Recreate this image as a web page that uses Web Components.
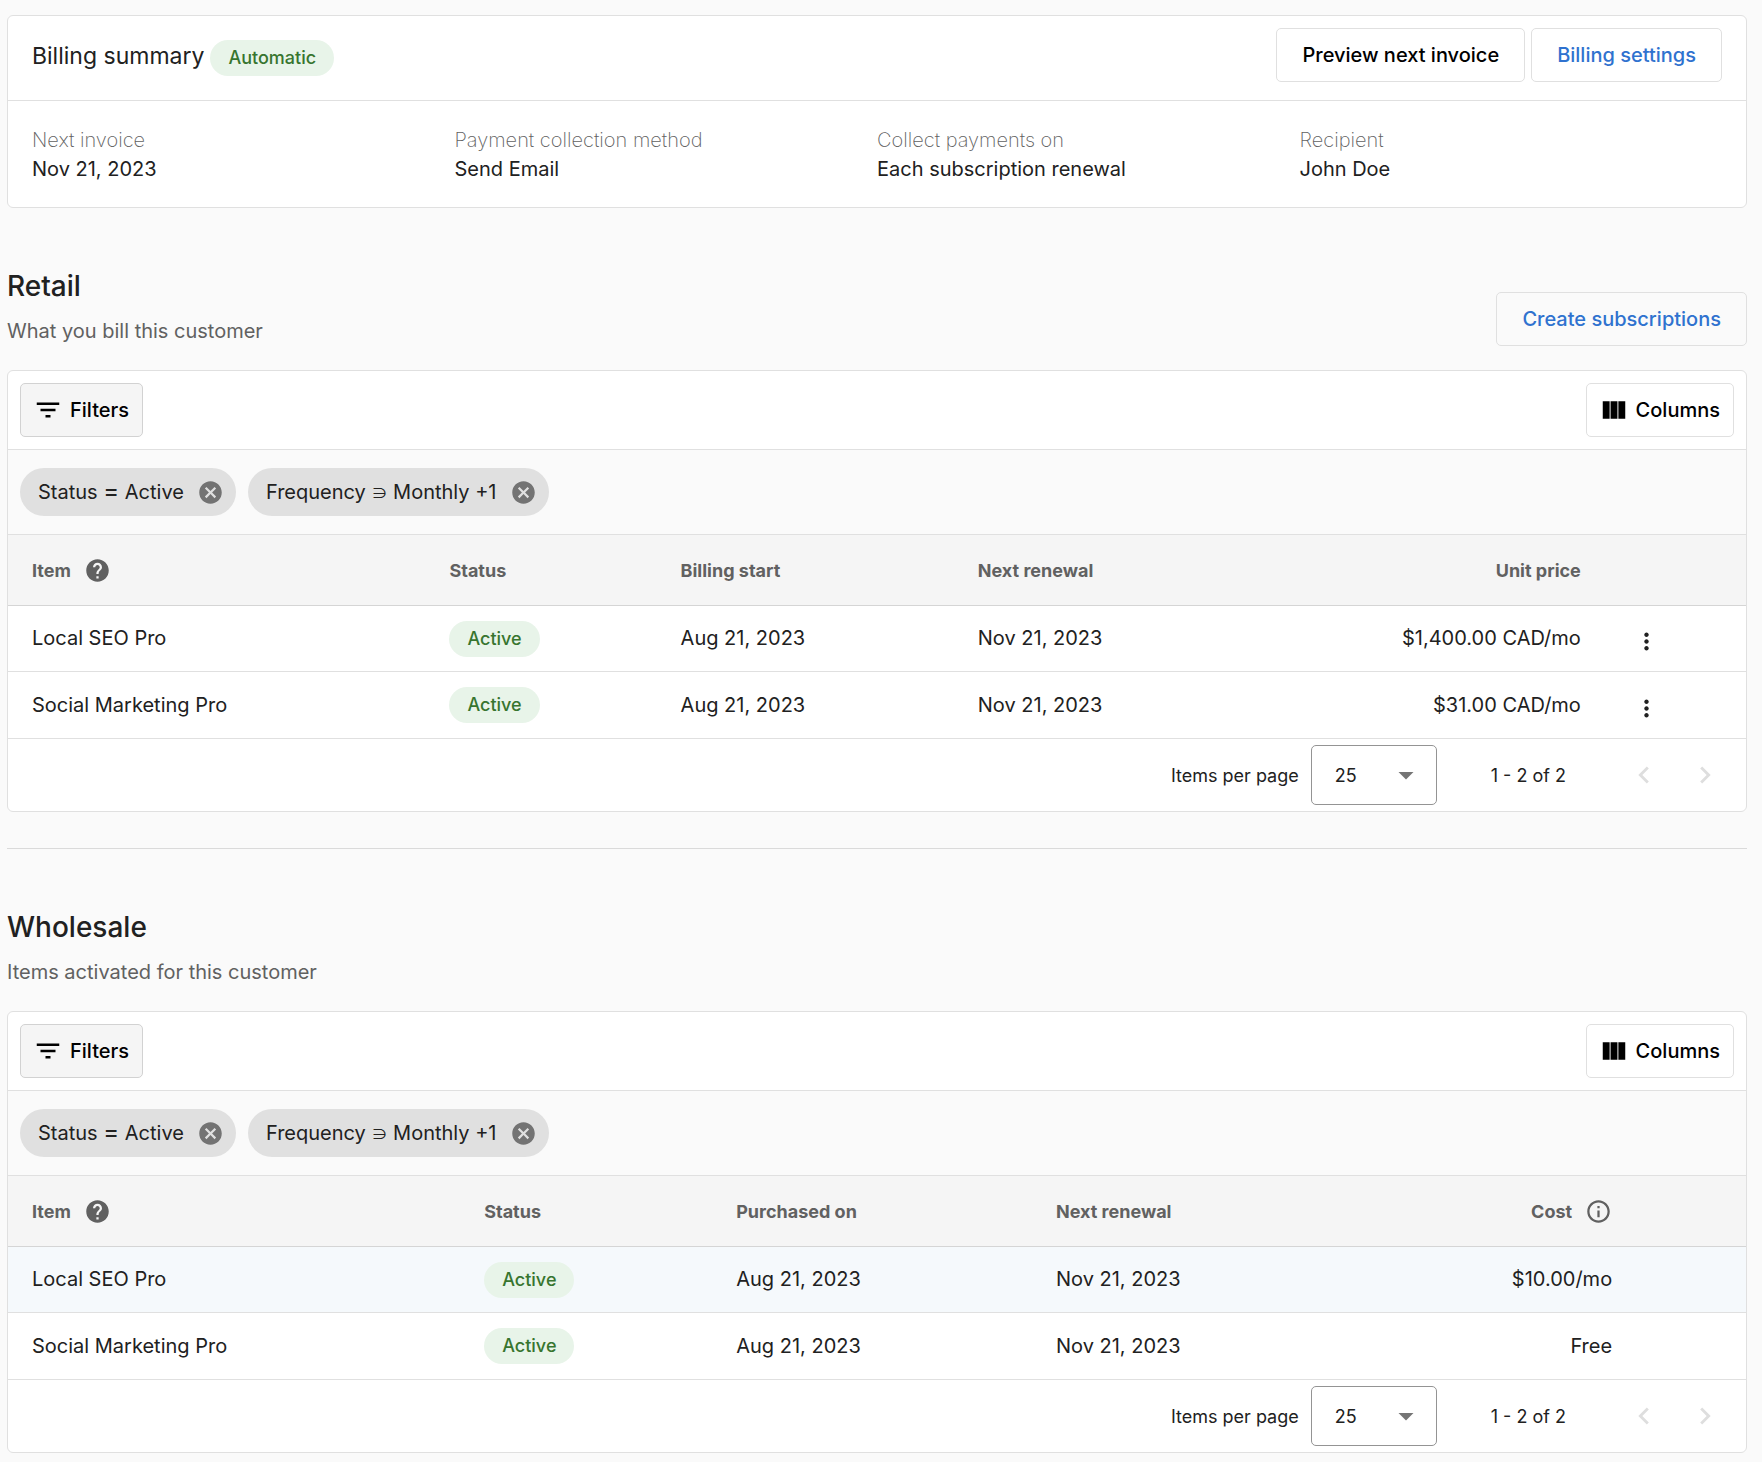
<!DOCTYPE html>
<html lang="en">
<head>
<meta charset="utf-8">
<title>Billing</title>
<style>
  body {
    margin: 0;
    padding: 15px 15px 9px 7px;
    background: #fafafa;
    color: #212121;
    font: 400 20px/29px Inter, "Liberation Sans", sans-serif;
    --line: #e0e0e0;
    --muted: #616161;
  }
</style>
</head>
<body>
<billing-page></billing-page>
<script>
const define = (name, css, html) => {
  customElements.define(name, class extends HTMLElement {
    connectedCallback() {
      if (this.shadowRoot) return;
      const root = this.attachShadow({ mode: "open" });
      const body = typeof html === "function" ? html(this) : html;
      root.innerHTML = `<style>*{box-sizing:border-box}${css}</style>${body}`;
    }
  });
};

const ICONS = {
  filter: '<path d="M10 18h4v-2h-4v2zM3 6v2h18V6H3zm3 7h12v-2H6v2z"/>',
  columns: '<path d="M3 5h5.500v14H3zM9.250 5h5.500v14h-5.500zM15.500 5H21v14h-5.500z"/>',
  cancel: '<path d="M12 2C6.470 2 2 6.470 2 12s4.470 10 10 10 10-4.470 10-10S17.530 2 12 2zm5 13.590L15.590 17 12 13.410 8.410 17 7 15.590 10.590 12 7 8.410 8.410 7 12 10.590 15.590 7 17 8.410 13.410 12 17 15.590z"/>',
  help: '<path d="M12 2C6.480 2 2 6.480 2 12s4.480 10 10 10 10-4.480 10-10S17.520 2 12 2zm1 17h-2v-2h2v2zm2.070-7.750l-.9.920C13.450 12.900 13 13.500 13 15h-2v-.5c0-1.100.45-2.100 1.170-2.830l1.240-1.260c.37-.36.59-.86.59-1.410 0-1.100-.9-2-2-2s-2 .9-2 2H8c0-2.210 1.790-4 4-4s4 1.790 4 4c0 .88-.36 1.680-.93 2.250z"/>',
  info: '<path d="M11 7h2v2h-2zm0 4h2v6h-2zm1-9C6.480 2 2 6.480 2 12s4.480 10 10 10 10-4.480 10-10S17.520 2 12 2zm0 18c-4.410 0-8-3.590-8-8s3.590-8 8-8 8 3.590 8 8-3.590 8-8 8z"/>',
  more: '<path d="M12 8c1.100 0 2-.9 2-2s-.9-2-2-2-2 .9-2 2 .9 2 2 2zm0 2c-1.100 0-2 .9-2 2s.9 2 2 2 2-.9 2-2-.9-2-2-2zm0 6c-1.100 0-2 .9-2 2s.9 2 2 2 2-.9 2-2-.9-2-2-2z"/>',
  prev: '<path d="M15.410 7.410L14 6l-6 6 6 6 1.410-1.410L10.830 12z"/>',
  next: '<path d="M10 6L8.590 7.410 13.170 12l-4.580 4.590L10 18l6-6z"/>',
  drop: '<path d="M7 10l5 5 5-5z"/>'
};

define("ui-icon",
  `:host{display:inline-block;flex:none;width:var(--size,27px);height:var(--size,27px)}
   svg{display:block;width:100%;height:100%;fill:currentColor}`,
  el => `<svg viewBox="0 0 24 24" aria-hidden="true">${ICONS[el.getAttribute("name")]}</svg>`);

define("ui-button",
  `:host{display:inline-block}
   button{display:flex;align-items:center;gap:7px;height:54px;padding:0 25px;border:1px solid var(--line);
     border-radius:5px;background:transparent;color:#000;font:inherit;font-weight:500;white-space:nowrap}
   ui-icon{--size:30px}
   :host([primary]) button{color:#2f72cf}
   :host([icon]) button{padding:0 13px 0 12px}
   :host([active]) button{background:#f5f5f5;border-color:#d2d2d2}`,
  el => `<button type="button">${el.hasAttribute("icon") ? `<ui-icon name="${el.getAttribute("icon")}"></ui-icon>` : ""}<slot></slot></button>`);

define("ui-badge",
  `:host{display:inline-block;height:36px;padding:0 18px;border-radius:18px;background:#e8f4e9;color:#37752f;
     font-size:18px;font-weight:500;line-height:36px}`,
  `<slot></slot>`);

define("ui-chip",
  `:host{display:flex;align-items:center;gap:13px;height:48px;padding:0 12px 0 18px;border-radius:24px;background:#e0e0e0}
   .op{font-size:24px;line-height:1}
   .op.set{font-family:"Noto Sans CJK JP",sans-serif;font-size:16px}
   button{display:flex;padding:0;border:0;background:none;color:#737373}`,
  el => {
    const op = el.getAttribute("op");
    return `<span>${el.getAttribute("field")} <span class="op${op === "=" ? "" : " set"}">${op}</span> <slot></slot></span>
    <button type="button" aria-label="Remove filter"><ui-icon name="cancel"></ui-icon></button>`;
  });

define("billing-field",
  `:host{display:block}
   dt{color:var(--muted);font-weight:200} dd,dl{margin:0}`,
  el => `<dl><dt>${el.getAttribute("label")}</dt><dd><slot></slot></dd></dl>`);

define("billing-summary",
  `:host{display:block;background:#fff;border:1px solid var(--line);border-radius:6px}
   header{display:flex;align-items:flex-start;justify-content:space-between;padding:12px 24px 18px;border-bottom:1px solid var(--line)}
   .title{display:flex;align-items:flex-start;gap:6px;padding-top:12px}
   h2{margin:0;font-size:23px;font-weight:400;line-height:32px}
   .actions{display:flex;gap:6px}
   .fields{display:grid;grid-template-columns:repeat(4,1fr);padding:25px 24px 23px}`,
  `<header><div class="title"><h2>Billing summary</h2><ui-badge>Automatic</ui-badge></div>
     <div class="actions"><ui-button>Preview next invoice</ui-button><ui-button primary>Billing settings</ui-button></div></header>
   <div class="fields"><slot></slot></div>`);

define("section-heading",
  `:host{display:flex;align-items:flex-end;justify-content:space-between;margin:60px 0 24px}
   h1{margin:0 0 12px;font-size:28px;font-weight:500;line-height:36px}
   p{margin:0;color:var(--muted);line-height:30px}`,
  el => `<div><h1>${el.getAttribute("heading")}</h1><p>${el.getAttribute("note")}</p></div><slot></slot>`);

define("table-pager",
  `:host{display:flex;align-items:center;justify-content:flex-end;height:73px;padding-right:24px;border-top:1px solid var(--line);font-size:18px}
   label{margin-right:12px}
   .select{display:grid;align-items:center;width:126px;margin-right:54px}
   select,.select ui-icon{grid-area:1/1}
   select{appearance:none;width:100%;height:60px;padding:0 23px;border:1px solid #949494;border-radius:5px;background:transparent;color:inherit;font:inherit}
   .select ui-icon{--size:36px;justify-self:end;margin-right:13px;color:#757575;pointer-events:none}
   .range{margin-right:61px}
   nav{display:flex;gap:27px}
   nav ui-icon{--size:34px}
   button{display:flex;padding:0;border:0;background:none;color:#dedede}`,
  `<label for="size">Items per page</label>
   <div class="select"><select id="size"><option>25</option><option>50</option></select><ui-icon name="drop"></ui-icon></div>
   <span class="range">1 - 2 of 2</span>
   <nav><button type="button" aria-label="Previous page" disabled><ui-icon name="prev"></ui-icon></button>
   <button type="button" aria-label="Next page" disabled><ui-icon name="next"></ui-icon></button></nav>`);

const TABLES = {
  retail: {
    widths: [25.4, 13.3, 17.1, 17.3, 17.4, 9.5],
    cols: ["Item", "Status", "Billing start", "Next renewal", "Unit price"],
    icons: { 0: "help" }, menu: true,
    rows: [
      ["Local SEO Pro", "Active", "Aug 21, 2023", "Nov 21, 2023", "$1,400.00 CAD/mo"],
      ["Social Marketing Pro", "Active", "Aug 21, 2023", "Nov 21, 2023", "$31.00 CAD/mo"]
    ]
  },
  wholesale: {
    widths: [27.4, 14.5, 18.4, 16, 16, 7.7],
    cols: ["Item", "Status", "Purchased on", "Next renewal", "Cost"],
    icons: { 0: "help", 4: "info" }, hover: 0,
    rows: [
      ["Local SEO Pro", "Active", "Aug 21, 2023", "Nov 21, 2023", "$10.00/mo"],
      ["Social Marketing Pro", "Active", "Aug 21, 2023", "Nov 21, 2023", "Free"]
    ]
  }
};

define("subscription-table",
  `:host{display:block;background:#fff;border:1px solid var(--line);border-radius:6px;overflow:hidden}
   .bar{display:flex;justify-content:space-between;padding:12px;border-bottom:1px solid var(--line)}
   .chips{display:flex;gap:12px;padding:18px 12px;border-bottom:1px solid var(--line);background:#fafafa}
   table{width:100%;border-collapse:separate;border-spacing:0;table-layout:fixed}
   th,td{padding:0;text-align:left;height:66px;border-bottom:1px solid var(--line)}
   th{height:71px;background:#f5f5f5;border-color:#d5d5d5;color:var(--muted);font-size:18px;font-weight:700}
   tr:last-child td{border-bottom:0}
   th:first-child,td:first-child{padding-left:24px}
   .num{text-align:right}
   .head{display:inline-flex;align-items:center;gap:13px;vertical-align:middle}
   .more{padding:6px 0 0 52px}
   .more button{display:flex;padding:0;border:0;background:none;color:inherit}
   tr.hover td{background:#f5f9fc}
   td ui-badge{vertical-align:middle}`,
  el => {
    const d = TABLES[el.getAttribute("kind")];
    const last = d.cols.length - 1;
    return `<div class="bar"><ui-button icon="filter" active>Filters</ui-button><ui-button icon="columns">Columns</ui-button></div>
    <div class="chips"><ui-chip field="Status" op="=">Active</ui-chip><ui-chip field="Frequency" op="∋">Monthly +1</ui-chip></div>
    <table><colgroup>${d.widths.map(w => `<col style="width:${w}%">`).join("")}</colgroup>
    <thead><tr>${d.cols.map((c, i) => `<th scope="col"${i === last ? ' class="num"' : ""}>${d.icons[i] ? `<span class="head">${c}<ui-icon name="${d.icons[i]}"></ui-icon></span>` : c}</th>`).join("")}<th></th></tr></thead>
    <tbody>${d.rows.map((r, n) => `<tr${n === d.hover ? ' class="hover"' : ""}>${r.map((c, i) => `<td${i === last ? ' class="num"' : ""}>${i === 1 ? `<ui-badge>${c}</ui-badge>` : c}</td>`).join("")}<td class="more">${d.menu ? '<button type="button" aria-label="More actions"><ui-icon name="more"></ui-icon></button>' : ""}</td></tr>`).join("")}</tbody></table>
    <table-pager></table-pager>`;
  });

define("billing-page",
  `:host{display:block} hr{margin:36px 0 0;border:0;border-top:1px solid #dadada}`,
  `<billing-summary>
     <billing-field label="Next invoice">Nov 21, 2023</billing-field>
     <billing-field label="Payment collection method">Send Email</billing-field>
     <billing-field label="Collect payments on">Each subscription renewal</billing-field>
     <billing-field label="Recipient">John Doe</billing-field>
   </billing-summary>
   <section-heading heading="Retail" note="What you bill this customer"><ui-button primary>Create subscriptions</ui-button></section-heading>
   <subscription-table kind="retail"></subscription-table>
   <hr>
   <section-heading heading="Wholesale" note="Items activated for this customer"></section-heading>
   <subscription-table kind="wholesale"></subscription-table>`);
</script>
</body>
</html>
